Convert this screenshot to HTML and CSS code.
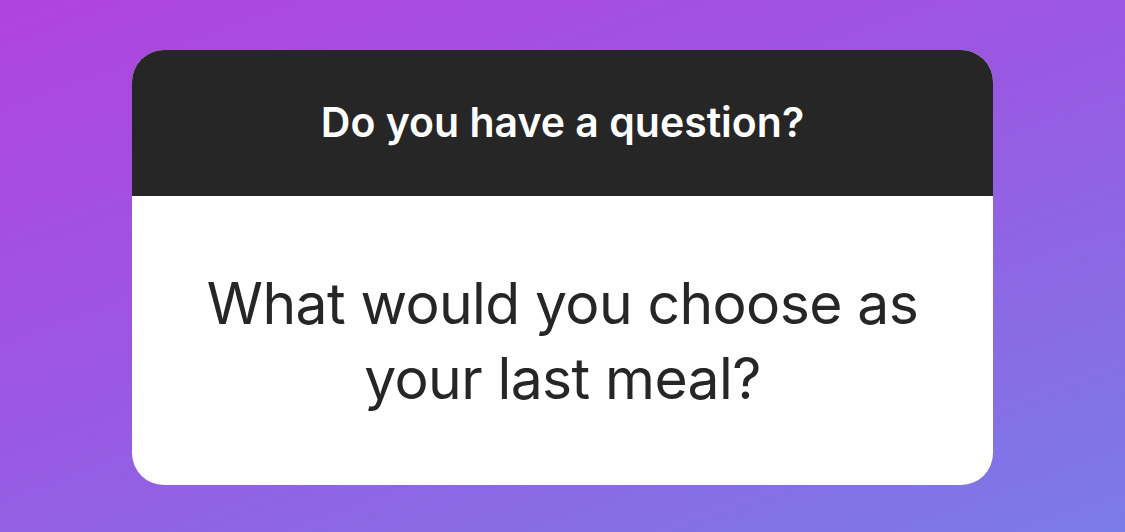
FILE: index.html
```html
<!DOCTYPE html>
<html>
<head>
<meta charset="utf-8">
<link rel="stylesheet" href="styles.css">
</head>
<body>
<div class="stage">
  <div class="card">
    <div class="card-head">Do you have a question?</div>
    <div class="card-body">What would you choose as your last meal?</div>
  </div>
</div>
</body>
</html>
```
FILE: styles.css
```css
html, body {
  margin: 0;
  padding: 0;
  width: 1125px;
  height: 532px;
  overflow: hidden;
}
.stage {
  width: 1125px;
  height: 532px;
  box-sizing: border-box;
  padding: 50px 132px 47px 132px;
  background: linear-gradient(160deg, #b044dd 0%, #9a58e2 45%, #7a7be8 100%);
}
.card {
  height: 435px;
  border-radius: 32px;
  overflow: hidden;
  display: flex;
  flex-direction: column;
  background: #ffffff;
}
.card-head {
  height: 146px;
  flex: none;
  background: #262626;
  color: #ffffff;
  font-family: Inter, "Liberation Sans", sans-serif;
  font-weight: 600;
  font-size: 41px;
  display: flex;
  align-items: center;
  justify-content: center;
  padding-bottom: 2px;
  box-sizing: border-box;
}
.card-body {
  flex: 1;
  display: flex;
  align-items: center;
  justify-content: center;
  text-align: center;
  padding: 0 40px;
  color: #262626;
  font-family: Inter, "Liberation Sans", sans-serif;
  font-size: 57px;
  line-height: 75px;
  letter-spacing: -0.6px;
}
```
